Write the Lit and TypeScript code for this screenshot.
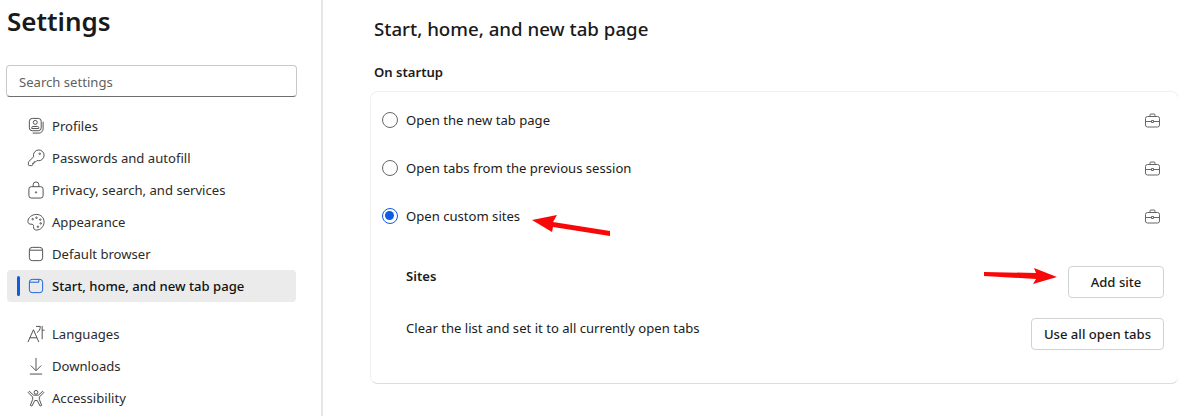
import { LitElement, css, html, svg } from 'lit'
import { customElement } from 'lit/decorators.js'

const ICONS: Record<string, unknown> = {
  profiles: svg`<rect x="2.500" y="1.500" width="12.500" height="13" rx="3"/><path d="M17 5v7.500a4.500 4.500 0 0 1-4.500 4.500H6"/><circle cx="8.700" cy="5.700" r="2.100"/><path d="M5 12.200v-.9c0-.8.600-1.300 1.300-1.300h4.800c.7 0 1.300.5 1.300 1.300v.9Z"/>`,
  key: svg`<path d="M12.300 1a5.700 5.700 0 0 1 0 11.400c-.6 0-1.200-.1-1.700-.3L9.300 13.500H7.500V15H6v1.500c0 .6-.4 1-1 1H2.500c-.6 0-1-.4-1-1v-2.300c0-.4.100-.7.400-1L7 8.300a5.700 5.700 0 0 1 5.300-7.300Z"/><circle cx="13.500" cy="5" r=".8"/>`,
  lock: svg`<rect x="2" y="6" width="15" height="12" rx="2.500"/><path d="M6.500 6V4a3 3 0 0 1 6 0v2"/><circle cx="9.500" cy="12" r=".7"/>`,
  palette: svg`<path d="M10 1.500C5.300 1.500 1 4.700 1 9c0 2.200 1.600 2.800 3.200 2.800s3 .5 2.700 2.500c-.3 2.200 1 3.700 3.100 3.700 4.300 0 8-3.600 8-8.400S14.700 1.500 10 1.500Z"/><circle cx="6" cy="6.500" r=".8"/><circle cx="10" cy="5" r=".8"/><circle cx="14" cy="7" r=".8"/><circle cx="14.500" cy="11" r=".8"/><circle cx="11.500" cy="14.500" r=".8"/>`,
  window: svg`<rect x="2.500" y="2.500" width="14" height="14" rx="3"/><path d="M2.500 5.500h14"/>`,
  home: svg`<rect x="2.500" y="2.500" width="14" height="14" rx="3"/><path d="M2.500 5.500h10v-3"/>`,
  lang: svg`<path d="M1 18 6.800 5l5.700 13M3 13.500h7.500"/><path d="M9.500 1.500h4.500c0 3-1 5-3.500 6.500M16 1v14M16 5.500h2.500"/>`,
  download: svg`<path d="M9.500 1v13M4 9l5.500 5.500L15 9M3 18h13"/>`,
  access: svg`<circle cx="9.500" cy="3.500" r="2"/><path d="M2.500 2.500 7 6.500h5l4.500-4 1.200 1.300L13 8.500v2.500l2.500 6.200-1.700.8-3-5.800H8.200l-3 5.800-1.700-.8L6 11V8.500L1.300 3.800Z"/>`,
}

type NavItem = { icon: string; label: string; active?: boolean }

const NAV_TOP: NavItem[] = [
  { icon: 'profiles', label: 'Profiles' },
  { icon: 'key', label: 'Passwords and autofill' },
  { icon: 'lock', label: 'Privacy, search, and services' },
  { icon: 'palette', label: 'Appearance' },
  { icon: 'window', label: 'Default browser' },
  { icon: 'home', label: 'Start, home, and new tab page', active: true },
]
const NAV_BOTTOM: NavItem[] = [
  { icon: 'lang', label: 'Languages' },
  { icon: 'download', label: 'Downloads' },
  { icon: 'access', label: 'Accessibility' },
]

const RADIOS = [
  { label: 'Open the new tab page', checked: false },
  { label: 'Open tabs from the previous session', checked: false },
  { label: 'Open custom sites', checked: true },
]

@customElement('app-root')
export class AppRoot extends LitElement {
  static styles = css`
    :host {
      display: block;
      width: 1178px;
      height: 416px;
      overflow: hidden;
      position: relative;
      background: #fff;
      font-family: "Noto Sans", "Open Sans", sans-serif;
      font-size: 13.100px;
      color: #1b1b1b;
    }
    .page {
      display: flex;
      height: 416px;
    }
    .side {
      box-sizing: border-box;
      flex: 0 0 322px;
      height: 416px;
      border-right: 2px solid #e6e6e6;
      padding: 0 24px 0 6px;
    }
    h1 {
      margin: 0;
      height: 65px;
      padding-left: 1px;
      font-size: 26px;
      line-height: 43px;
      font-weight: 600;
      color: #1a1a1a;
    }
    .search {
      box-sizing: border-box;
      width: 291px;
      height: 32px;
      border: 1px solid #c8c8c8;
      border-bottom: 1px solid #6e6e6e;
      border-radius: 4px;
      padding-left: 12px;
      line-height: 32px;
      color: #5f5f5f;
    }
    nav {
      margin-top: 13px;
      width: 291px;
    }
    .group + .group {
      margin-top: 16px;
    }
    .item {
      position: relative;
      display: flex;
      align-items: center;
      gap: 7px;
      height: 32px;
      padding-left: 20px;
      margin-left: 1px;
      width: 289px;
      box-sizing: border-box;
      border-radius: 4px;
      color: #2b2b2b;
    }
    .item.active {
      background: #ebebeb;
      color: #111;
      font-weight: 500;
    }
    .item.active::before {
      content: '';
      position: absolute;
      left: 10px;
      top: 6px;
      width: 3px;
      height: 20px;
      border-radius: 2px;
      background: #0f5ce0;
    }
    .item svg {
      width: 18px;
      height: 18px;
      flex: none;
      fill: none;
      stroke: #4a4a4a;
      stroke-width: 1;
    }
    .item.active svg {
      stroke: #0f5ce0;
    }
    main {
      flex: 1;
      min-width: 0;
      padding-left: 47px;
    }
    h2 {
      margin: 0;
      padding-left: 4px;
      height: 62px;
      font-size: 18.700px;
      line-height: 57px;
      font-weight: 500;
      color: #1a1a1a;
    }
    h3 {
      margin: 0;
      padding-left: 4px;
      height: 29px;
      font-size: 13.100px;
      line-height: 20px;
      font-weight: 600;
    }
    .card {
      box-sizing: border-box;
      width: 809px;
      height: 293px;
      border: 1px solid #f0f0f0;
      border-bottom: 1.500px solid #dcdcdc;
      border-radius: 8px;
      padding: 4px 14px 0 11px;
    }
    .row {
      display: flex;
      align-items: center;
      height: 48px;
    }
    .row .label {
      flex: 1;
      margin-left: 8px;
    }
    .radio {
      box-sizing: border-box;
      width: 16px;
      height: 16px;
      border: 1px solid #666;
      border-radius: 50%;
      flex: none;
    }
    .radio.on {
      border: 1.500px solid #0f5ce0;
      padding: 2px;
    }
    .radio.on::before {
      content: '';
      display: block;
      width: 9px;
      height: 9px;
      border-radius: 50%;
      background: #0f5ce0;
    }
    .brief {
      width: 15px;
      height: 15px;
      margin-right: 4px;
      flex: none;
      fill: none;
      stroke: #666;
      stroke-width: 1;
    }
    .sub {
      display: flex;
      align-items: center;
      justify-content: space-between;
      height: 32px;
      padding-left: 24px;
    }
    .sub span {
      margin-top: -12px;
    }
    .sites {
      margin-top: 26px;
    }
    .clear {
      margin-top: 20px;
    }
    .sites span {
      font-weight: 600;
    }
    button {
      box-sizing: border-box;
      height: 32px;
      background: #fff;
      border: 1px solid #d2d2d2;
      border-radius: 4px;
      font: 500 13.100px "Noto Sans", "Open Sans", sans-serif;
      color: #1b1b1b;
      padding: 0;
    }
    .add {
      width: 96px;
    }
    .use {
      width: 133px;
    }
    .arrows {
      position: absolute;
      inset: 0;
      pointer-events: none;
    }
  `

  private navItem(i: NavItem) {
    return html`<div class="item ${i.active ? 'active' : ''}">
      <svg viewBox="0 0 19 19">${ICONS[i.icon]}</svg>
      <span>${i.label}</span>
    </div>`
  }

  render() {
    return html`
      <div class="page">
        <aside class="side">
          <h1>Settings</h1>
          <div class="search">Search settings</div>
          <nav>
            <div class="group">${NAV_TOP.map((i) => this.navItem(i))}</div>
            <div class="group">${NAV_BOTTOM.map((i) => this.navItem(i))}</div>
          </nav>
        </aside>
        <main>
          <h2>Start, home, and new tab page</h2>
          <h3>On startup</h3>
          <section class="card">
            ${RADIOS.map(
              (r) => html`<div class="row">
                <div class="radio ${r.checked ? 'on' : ''}"></div>
                <span class="label">${r.label}</span>
                <svg class="brief" viewBox="0 0 15 15">
                  <rect x=".5" y="3.500" width="14" height="10.500" rx="2" />
                  <path d="M5 3.500V2a1 1 0 0 1 1-1h3a1 1 0 0 1 1 1v1.500M.5 8.500h5.500M9 8.500h5.500M6.500 7.500h2v2h-2Z" />
                </svg>
              </div>`,
            )}
            <div class="sub sites"><span>Sites</span><button class="add">Add site</button></div>
            <div class="sub clear">
              <span>Clear the list and set it to all currently open tabs</span>
              <button class="use">Use all open tabs</button>
            </div>
          </section>
        </main>
      </div>
      <svg class="arrows" viewBox="0 0 1178 416">
        <path fill="#f80808" d="M532 220 557 215 553 222 610 231 610 236 553 227 552 232Z" />
        <path fill="#f80808" d="M984 272 1036 273 1034 268 1057 277 1033 284 1036 279 984 276Z" />
      </svg>
    `
  }
}
